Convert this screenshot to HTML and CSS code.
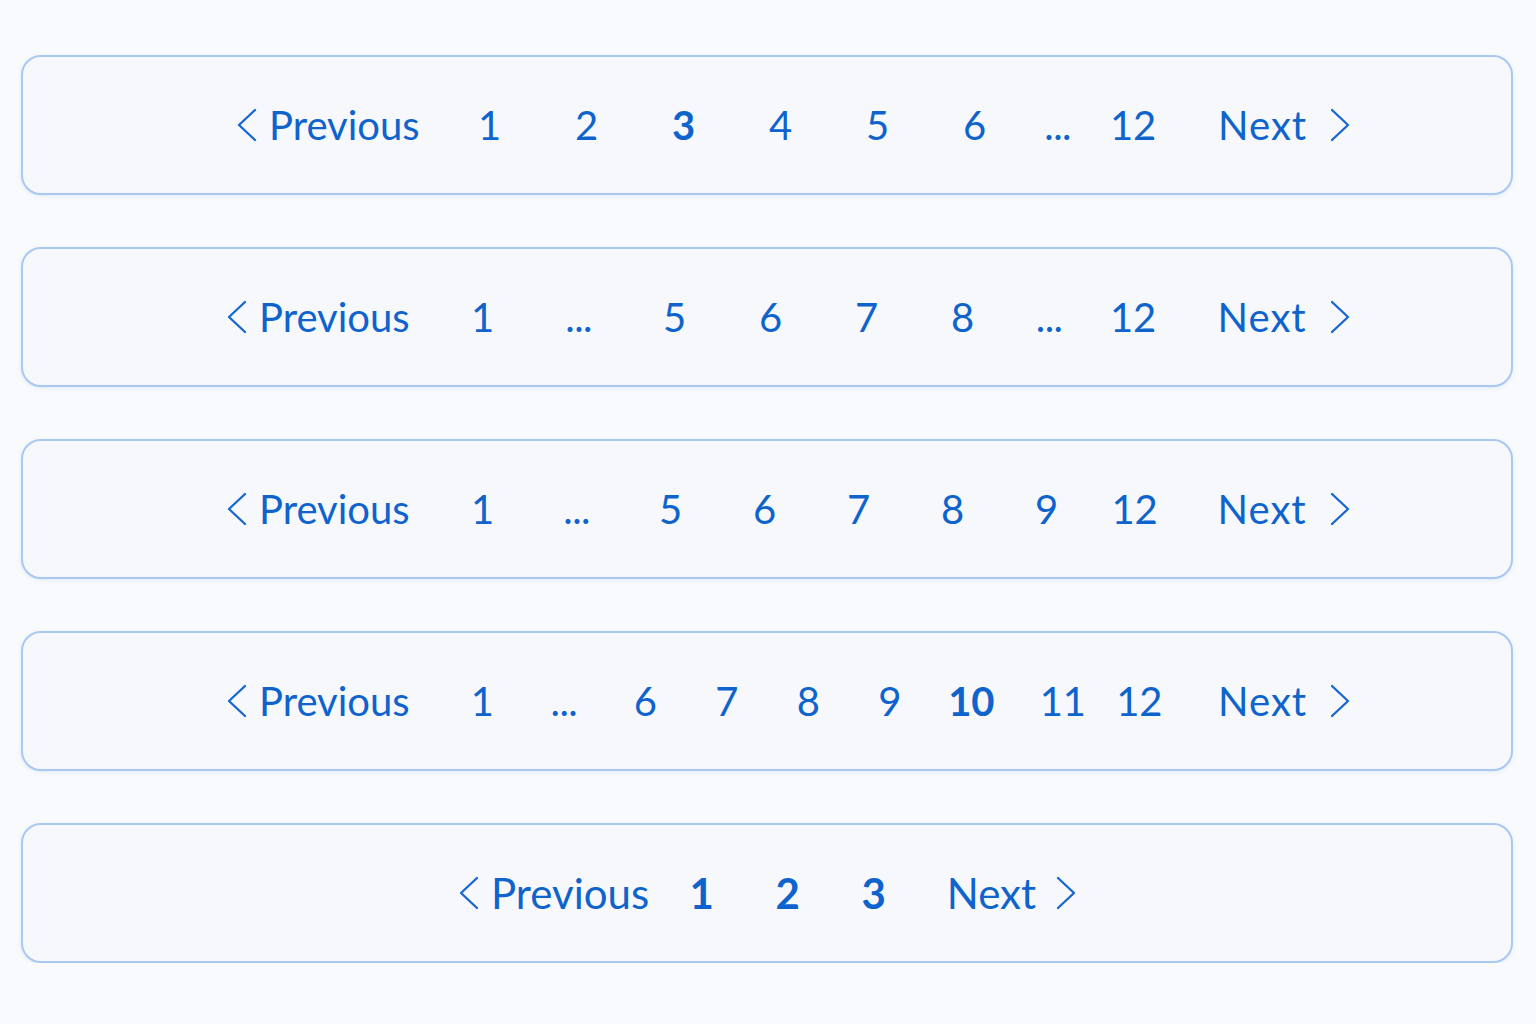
FILE: index.html
```html
<!DOCTYPE html>
<html lang="en">
<head>
<meta charset="utf-8">
<title>Pagination</title>
<link rel="stylesheet" href="styles.css">
</head>
<body>
<main class="stack">
  <nav class="pager pager--r1" aria-label="Pagination 1">
    <a class="nav-link prev"><svg class="chev" viewBox="0 0 22 36"><polyline points="19,3 3,18 19,33"/></svg><span>Previous</span></a>
    <a class="page">1</a>
    <a class="page">2</a>
    <a class="page current">3</a>
    <a class="page">4</a>
    <a class="page">5</a>
    <a class="page">6</a>
    <span class="ellipsis ellipsis--end">...</span>
    <a class="page page--last">12</a>
    <a class="nav-link next"><span>Next</span><svg class="chev" viewBox="0 0 22 36"><polyline points="3,3 19,18 3,33"/></svg></a>
  </nav>

  <nav class="pager pager--r2" aria-label="Pagination 2">
    <a class="nav-link prev"><svg class="chev" viewBox="0 0 22 36"><polyline points="19,3 3,18 19,33"/></svg><span>Previous</span></a>
    <a class="page">1</a>
    <span class="ellipsis">...</span>
    <a class="page">5</a>
    <a class="page">6</a>
    <a class="page">7</a>
    <a class="page">8</a>
    <span class="ellipsis ellipsis--end">...</span>
    <a class="page page--last">12</a>
    <a class="nav-link next"><span>Next</span><svg class="chev" viewBox="0 0 22 36"><polyline points="3,3 19,18 3,33"/></svg></a>
  </nav>

  <nav class="pager pager--r3" aria-label="Pagination 3">
    <a class="nav-link prev"><svg class="chev" viewBox="0 0 22 36"><polyline points="19,3 3,18 19,33"/></svg><span>Previous</span></a>
    <a class="page">1</a>
    <span class="ellipsis">...</span>
    <a class="page">5</a>
    <a class="page">6</a>
    <a class="page">7</a>
    <a class="page">8</a>
    <a class="page">9</a>
    <a class="page page--last">12</a>
    <a class="nav-link next"><span>Next</span><svg class="chev" viewBox="0 0 22 36"><polyline points="3,3 19,18 3,33"/></svg></a>
  </nav>

  <nav class="pager pager--r4" aria-label="Pagination 4">
    <a class="nav-link prev"><svg class="chev" viewBox="0 0 22 36"><polyline points="19,3 3,18 19,33"/></svg><span>Previous</span></a>
    <a class="page">1</a>
    <span class="ellipsis">...</span>
    <a class="page">6</a>
    <a class="page">7</a>
    <a class="page">8</a>
    <a class="page">9</a>
    <a class="page current">10</a>
    <a class="page page--wide">11</a>
    <a class="page page--last">12</a>
    <a class="nav-link next"><span>Next</span><svg class="chev" viewBox="0 0 22 36"><polyline points="3,3 19,18 3,33"/></svg></a>
  </nav>

  <nav class="pager pager--r5" aria-label="Pagination 5">
    <a class="nav-link prev"><svg class="chev" viewBox="0 0 22 36"><polyline points="19,3 3,18 19,33"/></svg><span>Previous</span></a>
    <a class="page current">1</a>
    <a class="page current">2</a>
    <a class="page current page--last">3</a>
    <a class="nav-link next"><span>Next</span><svg class="chev" viewBox="0 0 22 36"><polyline points="3,3 19,18 3,33"/></svg></a>
  </nav>
</main>
</body>
</html>
```

FILE: styles.css
```css
* { box-sizing: border-box; }

html, body {
  margin: 0;
  background: #f8fafd;
}

body {
  font-family: Lato, "Noto Sans", sans-serif;
  color: #0e63cc;
}

.stack {
  display: flex;
  flex-direction: column;
  gap: 52px;
  padding: 55px 23px 0 21px;
}

.pager {
  --cell: 96px;
  --ell-end: var(--cell);
  --last: var(--cell);
  --pl: 203px;
  --m1: 25px;
  --m2: 36px;
  height: 140px;
  border: 2px solid #a9c9f1;
  border-radius: 20px;
  background: #f6f8fc;
  box-shadow: 0 1px 4px rgba(120, 160, 220, 0.16);
  display: flex;
  align-items: center;
  justify-content: flex-start;
  padding-left: var(--pl);
  font-size: 40px;
  line-height: 1;
}

.pager a, .pager span {
  text-decoration: none;
  color: inherit;
}

.nav-link {
  display: flex;
  align-items: center;
  flex: none;
}

.prev { margin-right: var(--m1); }
.next { margin-left: var(--m2); }

.next span { letter-spacing: 1px; }

.chev {
  width: 22px;
  height: 36px;
  fill: none;
  stroke: #1566cf;
  stroke-width: 2.3;
  stroke-linecap: round;
  stroke-linejoin: round;
}

.prev .chev { margin-right: 11px; }
.next .chev { margin-left: 22px; }

.page, .ellipsis {
  flex: none;
  width: var(--cell);
  text-align: center;
}

.page--last { width: var(--last); }
.ellipsis--end { width: var(--ell-end); }

.current {
  font-weight: 700;
  color: #0a5fd3;
}

.ellipsis {
  letter-spacing: -0.5px;
}

.pager--r1 {
  --cell: 97px;
  --ell-end: 69px;
  --last: 82px;
  --pl: 213px;
  --m1: 21.5px;
  --m2: 44px;
}

.pager--r2 {
  --cell: 96px;
  --ell-end: 77px;
  --last: 91px;
  --pl: 203px;
  --m1: 25px;
  --m2: 39px;
}

.pager--r3 {
  --cell: 94px;
  --last: 82px;
  --pl: 203px;
  --m1: 26px;
  --m2: 42px;
}

.pager--r4 {
  --cell: 81.5px;
  --pl: 203px;
  --m1: 32px;
  --m2: 43px;
}
.pager--r4 .page--wide {
  width: 91.5px;
  padding-left: 10px;
}
.pager--r4 .page--last {
  width: 71.5px;
}

.pager--r5 {
  --cell: 86px;
  --pl: 435px;
  --m1: 9.6px;
  --m2: 30px;
  font-size: 42px;
}
.pager--r5 .next span { letter-spacing: 0; }
.pager--r5 .next .chev { margin-left: 19px; }
```
